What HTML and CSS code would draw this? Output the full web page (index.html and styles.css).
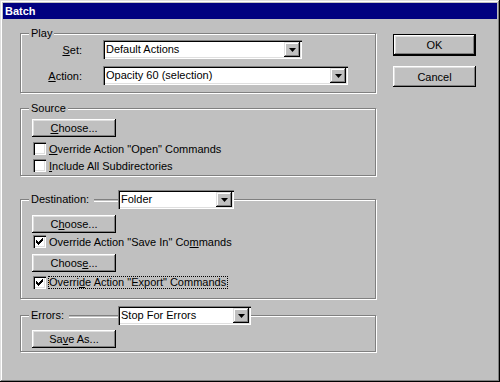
FILE: index.html
```html
<!DOCTYPE html>
<html lang="en">
<head>
    <meta charset="UTF-8">
    <title>Batch</title>
    <link rel="stylesheet" href="styles.css">
</head>
<body>

<div class="window">
    <div class="titlebar">Batch</div>
    <div class="dialog">
        <div class="groups">

            <fieldset class="group group-play">
                <legend class="group-title">Play</legend>
                <div class="group-body">
                    <div class="field-row">
                        <span class="field-label"><u>S</u>et:</span>
                        <div class="select select-set">
                            <span class="select-value">Default Actions</span>
                            <span class="select-arrow"><svg width="7" height="4" viewBox="0 0 7 4"><polygon points="0,0 7,0 3.5,4" fill="#000"/></svg></span>
                        </div>
                    </div>
                    <div class="field-row">
                        <span class="field-label"><u>A</u>ction:</span>
                        <div class="select select-action">
                            <span class="select-value">Opacity 60 (selection)</span>
                            <span class="select-arrow"><svg width="7" height="4" viewBox="0 0 7 4"><polygon points="0,0 7,0 3.5,4" fill="#000"/></svg></span>
                        </div>
                    </div>
                </div>
            </fieldset>

            <fieldset class="group group-source">
                <legend class="group-title">Source</legend>
                <div class="group-body">
                    <button class="btn btn-choose"><u>C</u>hoose...</button>
                    <div class="check-row">
                        <span class="checkbox"></span>
                        <span><u>O</u>verride Action "Open" Commands</span>
                    </div>
                    <div class="check-row">
                        <span class="checkbox"></span>
                        <span><u>I</u>nclude All Subdirectories</span>
                    </div>
                </div>
            </fieldset>

            <fieldset class="group group-destination">
                <legend class="group-title group-title-select legend-destination">
                    <span class="legend-label">Destination:</span>
                    <span class="legend-line"></span>
                    <div class="select select-folder">
                        <span class="select-value">Folder</span>
                        <span class="select-arrow"><svg width="7" height="4" viewBox="0 0 7 4"><polygon points="0,0 7,0 3.5,4" fill="#000"/></svg></span>
                    </div>
                </legend>
                <div class="group-body">
                    <button class="btn btn-choose">C<u>h</u>oose...</button>
                    <div class="check-row">
                        <span class="checkbox checked"><svg width="7" height="7" viewBox="0 0 7 7"><path d="M0 2h1v1h1v1h1v-1h1v-1h1v-1h1v-1h1v3h-1v1h-1v1h-1v1h-1v1h-1v-1h-1v-1h-1z" fill="#000"/></svg></span>
                        <span>Override Action "Save In" Co<u>m</u>mands</span>
                    </div>
                    <button class="btn btn-choose btn-choose-second">Choos<u>e</u>...</button>
                    <div class="check-row check-row-last">
                        <span class="checkbox checked"><svg width="7" height="7" viewBox="0 0 7 7"><path d="M0 2h1v1h1v1h1v-1h1v-1h1v-1h1v-1h1v3h-1v1h-1v1h-1v1h-1v1h-1v-1h-1v-1h-1z" fill="#000"/></svg></span>
                        <span class="focus">Overri<u>d</u>e Action "Export" Commands</span>
                    </div>
                </div>
            </fieldset>

            <fieldset class="group group-errors">
                <legend class="group-title group-title-select legend-errors">
                    <span class="legend-label">Errors:</span>
                    <span class="legend-line"></span>
                    <div class="select select-errors">
                        <span class="select-value">Stop For Errors</span>
                        <span class="select-arrow"><svg width="7" height="4" viewBox="0 0 7 4"><polygon points="0,0 7,0 3.5,4" fill="#000"/></svg></span>
                    </div>
                </legend>
                <div class="group-body">
                    <button class="btn btn-choose">Sa<u>v</u>e As...</button>
                </div>
            </fieldset>

        </div>

        <div class="actions">
            <button class="btn btn-default">OK</button>
            <button class="btn btn-cancel">Cancel</button>
        </div>
    </div>
</div>

</body>
</html>
```

FILE: styles.css
```css
body {
    margin: 0;
    font-family: "Liberation Sans", Arial, sans-serif;
    font-size: 11px;
    color: #000;
    background-color: #c0c0c0;
}
.window {
    width: 500px;
    height: 382px;
    box-sizing: border-box;
    padding: 3px;
    background-color: #c0c0c0;
    box-shadow: inset -1px -1px #000, inset 1px 1px #dfdfdf, inset -2px -2px #808080, inset 2px 2px #fff;
    overflow: hidden;
}
.titlebar {
    height: 16px;
    line-height: 16px;
    padding-left: 2px;
    background-color: #000080;
    color: #fff;
    font-weight: bold;
}
.dialog {
    display: flex;
}
.groups {
    width: 356px;
    margin-left: 17px;
    margin-top: 8px;
}
.group {
    margin: 0;
    padding: 0 0 0 8px;
    border: 1px solid #808080;
    box-shadow: inset 1px 1px 0 #fff, 1px 1px 0 #fff;
    min-width: 0;
}
.group-title {
    padding: 0 2px;
    line-height: 13px;
    background-color: #c0c0c0;
}
.group-title-select {
    display: flex;
    box-sizing: border-box;
    padding: 0 0 0 2px;
}
.legend-destination {
    width: 205px;
}
.legend-errors {
    width: 222px;
}
.legend-label {
    padding-right: 5px;
    line-height: 19px;
}
.legend-line {
    flex: 1;
    height: 1px;
    margin-top: 9px;
    border-top: 1px solid #808080;
    border-bottom: 1px solid #fff;
}
.group-body {
    padding-left: 3px;
}

.group-source {
    margin-top: 9px;
}
.group-destination {
    margin-top: 14px;
}
.group-errors {
    margin-top: 7px;
}

/* play */
.group-play .group-body {
    padding-bottom: 7px;
}
.field-row {
    display: flex;
    align-items: center;
}
.field-row + .field-row {
    margin-top: 7px;
}
.field-label {
    width: 50px;
    margin-right: 21px;
    text-align: right;
}

/* dropdowns */
.select {
    display: flex;
    height: 19px;
    box-sizing: border-box;
    padding: 2px;
    background-color: #fff;
    box-shadow: inset 1px 1px #808080, inset 2px 2px #000, inset -1px -1px #fff, inset -2px -2px #dfdfdf;
}
.select-value {
    flex: 1;
    padding-left: 1px;
    line-height: 15px;
    white-space: nowrap;
}
.select-arrow {
    width: 16px;
    display: flex;
    align-items: center;
    justify-content: center;
    background-color: #c0c0c0;
    box-shadow: inset -1px -1px #000, inset 1px 1px #dfdfdf, inset -2px -2px #808080, inset 2px 2px #fff;
}
.select-set {
    width: 199px;
}
.select-action {
    width: 245px;
}
.select-folder {
    width: 116px;
}
.select-errors {
    width: 133px;
}

/* buttons */
.btn {
    display: block;
    padding: 0;
    border: none;
    font-family: "Liberation Sans", Arial, sans-serif;
    font-size: 11px;
    color: #000;
    background-color: #c0c0c0;
    box-shadow: inset -1px -1px #000, inset 1px 1px #fff, inset -2px -2px #808080, inset 2px 2px #dfdfdf;
}
.btn-choose {
    width: 84px;
    height: 18px;
}
.group-source .btn-choose {
    margin-top: 4px;
    margin-bottom: 3px;
}
.group-destination .btn-choose {
    margin-top: 6px;
}
.group-destination .btn-choose-second {
    margin-top: 4px;
    margin-bottom: 2px;
}
.group-destination .group-body {
    padding-bottom: 7px;
}
.group-errors .btn-choose {
    margin-top: 5px;
    margin-bottom: 3px;
}
.group-source .group-body {
    padding-bottom: 1px;
}

/* checkboxes */
.check-row {
    display: flex;
    align-items: center;
    height: 17px;
}
.checkbox {
    width: 13px;
    height: 13px;
    box-sizing: border-box;
    margin-left: 1px;
    margin-right: 3px;
    display: flex;
    align-items: center;
    justify-content: center;
    background-color: #fff;
    box-shadow: inset 1px 1px #808080, inset 2px 2px #000, inset -1px -1px #fff, inset -2px -2px #dfdfdf;
}
.focus {
    padding-right: 1px;
    line-height: 11px;
    outline: 1px dotted #000;
}

/* right column */
.actions {
    margin-left: 17px;
    margin-top: 15px;
}
.btn-default {
    width: 83px;
    height: 22px;
    border: 1px solid #000;
}
.btn-cancel {
    width: 83px;
    height: 21px;
    margin-top: 10px;
}
```
